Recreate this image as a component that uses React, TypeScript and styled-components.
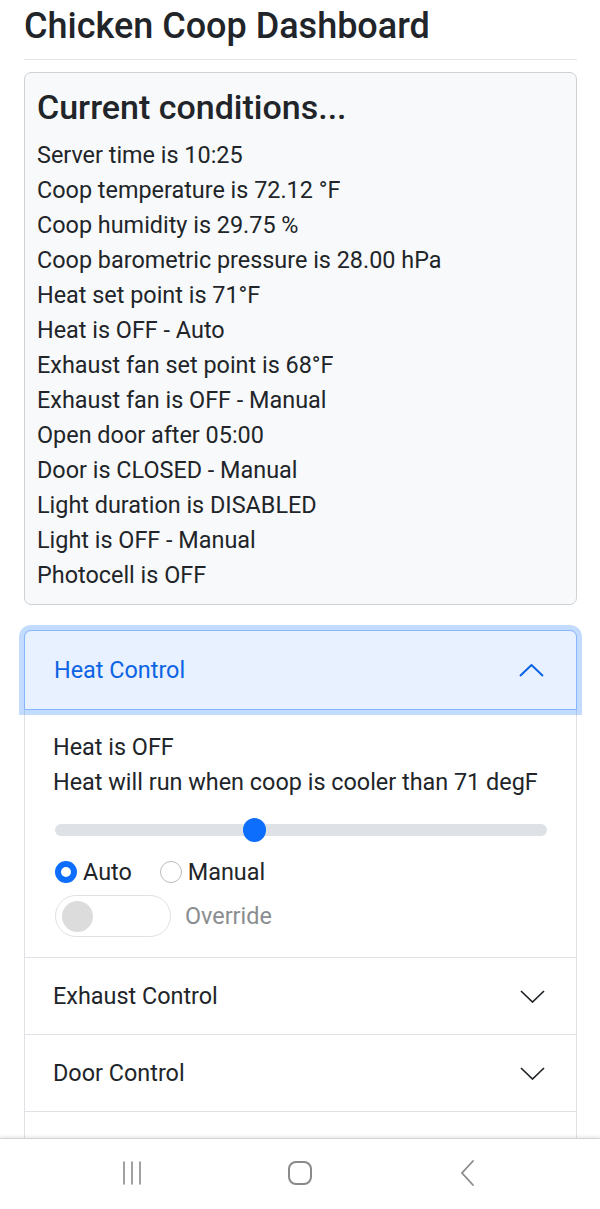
import React from "react";
import styled, { createGlobalStyle } from "styled-components";

const GlobalStyle = createGlobalStyle`
  * { box-sizing: border-box; }
  html, body { margin: 0; padding: 0; background: #ffffff; }
  body {
    font-family: Roboto, "Noto Sans", "Liberation Sans", sans-serif;
    color: #212529;
    -webkit-font-smoothing: antialiased;
  }
`;

const Page = styled.div`
  padding: 0 23px 20px 24px;
`;

const Title = styled.h1`
  margin: 6px 0 0;
  font-size: 36px;
  font-weight: 500;
  line-height: 40px;
  letter-spacing: 0;
`;

const Divider = styled.hr`
  margin: 13px 0 12px;
  border: 0;
  border-top: 1.5px solid #e3e3e3;
`;

const Card = styled.section`
  background: #f8f9fa;
  border: 1px solid #cfd2d5;
  border-radius: 7px;
  padding: 16px 12px 11px;
`;

const CardTitle = styled.h2`
  margin: 0 0 13px;
  font-size: 34px;
  font-weight: 500;
  line-height: 36px;
`;

const Line = styled.div<{ $muted?: boolean }>`
  font-size: 23.4px;
  line-height: 35px;
  color: ${(p) => (p.$muted ? "#8a8d90" : "#212529")};
  white-space: nowrap;
`;

const Accordion = styled.div`
  margin-top: 25px;
  border: 1px solid #dee2e6;
  border-radius: 7px;
  background: #fff;
`;

const Item = styled.div`
  & + & {
    border-top: 1px solid #dee2e6;
  }
`;

const Header = styled.button<{ $open?: boolean }>`
  display: flex;
  width: 100%;
  align-items: center;
  justify-content: space-between;
  height: ${(p) => (p.$open ? "80px" : "76px")};
  padding: 0 31px 0 28px;
  margin: 0;
  border: ${(p) => (p.$open ? "1px solid #86b7fe" : "0")};
  border-radius: ${(p) => (p.$open ? "7px 7px 0 0" : "0")};
  background: ${(p) => (p.$open ? "#e7f1ff" : "#fff")};
  color: ${(p) => (p.$open ? "#0c63e4" : "#212529")};
  box-shadow: ${(p) =>
    p.$open ? "0 0 0 5px rgba(13, 110, 253, 0.25)" : "none"};
  font-family: inherit;
  font-size: 23.4px;
  text-align: left;
  position: relative;
  z-index: ${(p) => (p.$open ? 1 : 0)};
  ${(p) =>
    p.$open
      ? "margin: -1px -1px 0; width: calc(100% + 2px); padding: 0 32px 0 29px;"
      : ""}
`;

const Chevron = styled.svg`
  width: 25px;
  height: 13px;
  flex: none;
`;

const Body = styled.div`
  padding: 20px 29px 20px 28px;
`;

const SliderWrap = styled.div`
  margin: 18px 0 0 2px;
  height: 24px;
  display: flex;
  align-items: center;
`;

const Range = styled.input`
  -webkit-appearance: none;
  appearance: none;
  width: 100%;
  height: 24px;
  margin: 0;
  background: transparent;
  &::-webkit-slider-runnable-track {
    height: 12px;
    border-radius: 6px;
    background: #dee2e6;
  }
  &::-webkit-slider-thumb {
    -webkit-appearance: none;
    width: 23px;
    height: 24px;
    margin-top: -6px;
    border-radius: 50%;
    background: #0d6efd;
    border: 0;
  }
`;

const RadioRow = styled.div`
  display: flex;
  align-items: center;
  margin-top: 16px;
  padding-left: 2px;
  height: 28px;
`;

const RadioLabel = styled.label`
  display: flex;
  align-items: center;
  font-size: 23.4px;
  line-height: 28px;
  margin-right: 28px;
`;

const Radio = styled.span<{ $checked?: boolean }>`
  width: 22px;
  height: 22px;
  border-radius: 50%;
  margin-right: 6px;
  flex: none;
  box-sizing: border-box;
  border: ${(p) => (p.$checked ? "6px solid #0d6efd" : "1px solid #b9bcc0")};
  background: #fff;
`;

const SwitchRow = styled.div`
  display: flex;
  align-items: center;
  margin-top: 9px;
  padding-left: 2px;
`;

const Switch = styled.span`
  display: flex;
  align-items: center;
  width: 116px;
  height: 42px;
  padding-left: 6px;
  border: 1px solid #dee2e6;
  border-radius: 21px;
  background: #fff;
  margin-right: 14px;
`;

const Knob = styled.span`
  width: 31px;
  height: 31px;
  border-radius: 50%;
  background: #dcdcdc;
`;

const NavBar = styled.nav`
  position: fixed;
  left: 0;
  right: 0;
  bottom: 0;
  height: 71px;
  background: #fff;
  border-top: 1px solid #d4d4d4;
  box-shadow: 0 -2px 3px rgba(0, 0, 0, 0.08);
  display: flex;
  align-items: center;
  justify-content: center;
  gap: 138px;
  padding-bottom: 2px;
`;

const NavIcon = styled.svg`
  width: 30px;
  height: 30px;
  color: #8a8a8a;
`;

const conditions = [
  "Server time is 10:25",
  "Coop temperature is 72.12 °F",
  "Coop humidity is 29.75 %",
  "Coop barometric pressure is 28.00 hPa",
  "Heat set point is 71°F",
  "Heat is OFF - Auto",
  "Exhaust fan set point is 68°F",
  "Exhaust fan is OFF - Manual",
  "Open door after 05:00",
  "Door is CLOSED - Manual",
  "Light duration is DISABLED",
  "Light is OFF - Manual",
  "Photocell is OFF",
];

const ChevronIcon = ({ up, color }: { up?: boolean; color: string }) => (
  <Chevron viewBox="0 0 25 13">
    <polyline
      points={up ? "1,12 12.5,1 24,12" : "1,1 12.5,12 24,1"}
      fill="none"
      stroke={color}
      strokeWidth={up ? 2 : 1.7}
      strokeLinejoin="miter"
    />
  </Chevron>
);

export default function App() {
  return (
    <>
      <GlobalStyle />
      <Page>
        <Title>Chicken Coop Dashboard</Title>
        <Divider />
        <Card>
          <CardTitle>Current conditions...</CardTitle>
          {conditions.map((c) => (
            <Line key={c}>{c}</Line>
          ))}
        </Card>
        <Accordion>
          <Item>
            <Header $open>
              <span>Heat Control</span>
              <ChevronIcon up color="#0c63e4" />
            </Header>
            <Body>
              <Line>Heat is OFF</Line>
              <Line>Heat will run when coop is cooler than 71 degF</Line>
              <SliderWrap>
                <Range type="range" min={55} max={95} defaultValue={71} />
              </SliderWrap>
              <RadioRow>
                <RadioLabel>
                  <Radio $checked />
                  Auto
                </RadioLabel>
                <RadioLabel>
                  <Radio />
                  Manual
                </RadioLabel>
              </RadioRow>
              <SwitchRow>
                <Switch>
                  <Knob />
                </Switch>
                <Line $muted>Override</Line>
              </SwitchRow>
            </Body>
          </Item>
          <Item>
            <Header>
              <span>Exhaust Control</span>
              <ChevronIcon color="#212529" />
            </Header>
          </Item>
          <Item>
            <Header>
              <span>Door Control</span>
              <ChevronIcon color="#212529" />
            </Header>
          </Item>
          <Item>
            <Header>
              <span>Light Control</span>
              <ChevronIcon color="#212529" />
            </Header>
          </Item>
        </Accordion>
      </Page>
      <NavBar>
        <NavIcon viewBox="0 0 30 30">
          <g stroke="currentColor" strokeWidth="1.6" strokeLinecap="round">
            <line x1="7" y1="4" x2="7" y2="26" />
            <line x1="15" y1="4" x2="15" y2="26" />
            <line x1="23" y1="4" x2="23" y2="26" />
          </g>
        </NavIcon>
        <NavIcon viewBox="0 0 30 30">
          <rect x="4" y="4" width="22" height="22" rx="7" fill="none" stroke="currentColor" strokeWidth="2" />
        </NavIcon>
        <NavIcon viewBox="0 0 30 30">
          <polyline points="20,3 9,15 20,27" fill="none" stroke="currentColor" strokeWidth="1.8" strokeLinecap="round" />
        </NavIcon>
      </NavBar>
    </>
  );
}
